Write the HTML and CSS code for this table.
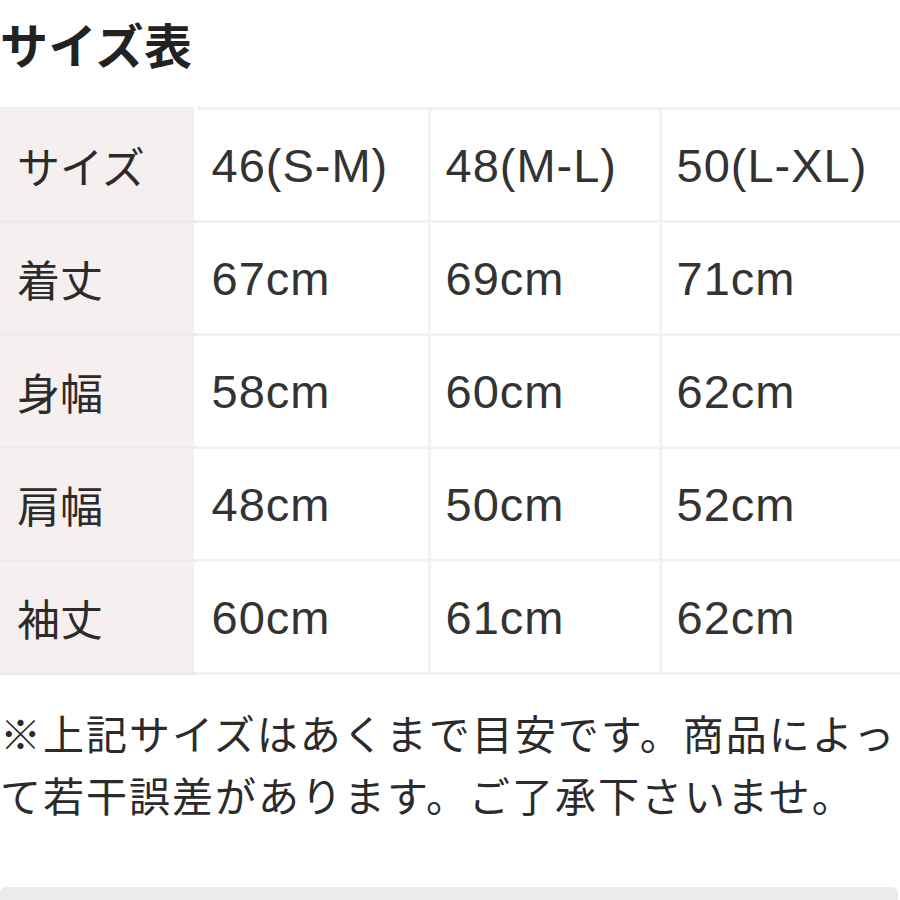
FILE: index.html
```html
<!DOCTYPE html>
<html lang="ja">
<head>
<meta charset="utf-8">
<link rel="stylesheet" href="styles.css">
</head>
<body>
<div class="page">
  <h2 class="title">サイズ表</h2>
  <table class="size-table">
    <colgroup>
      <col class="c1"><col class="c2"><col class="c3"><col class="c4">
    </colgroup>
    <tr><th>サイズ</th><td>46(S-M)</td><td>48(M-L)</td><td>50(L-XL)</td></tr>
    <tr><th>着丈</th><td>67cm</td><td>69cm</td><td>71cm</td></tr>
    <tr><th>身幅</th><td>58cm</td><td>60cm</td><td>62cm</td></tr>
    <tr><th>肩幅</th><td>48cm</td><td>50cm</td><td>52cm</td></tr>
    <tr><th>袖丈</th><td>60cm</td><td>61cm</td><td>62cm</td></tr>
  </table>
  <p class="note">※上記サイズはあくまで目安です。商品によっ<br>て若干誤差があります。ご了承下さいませ。</p>
  <div class="bottom-bar"></div>
</div>
</body>
</html>
```
FILE: styles.css
```css
html, body {
  margin: 0;
  padding: 0;
  background: #ffffff;
}
.page {
  width: 900px;
  height: 900px;
  overflow: hidden;
  font-family: "Liberation Sans", "Noto Sans CJK JP", sans-serif;
  color: #2b2b2b;
  display: flex;
  flex-direction: column;
}
.title {
  margin: 17px 0 0 0;
  font-family: "Noto Sans CJK JP", sans-serif;
  font-weight: 700;
  font-size: 48px;
  line-height: 52px;
  color: #222222;
  letter-spacing: 0.5px;
}
.size-table {
  margin-top: 38px;
  width: 900px;
  border-collapse: collapse;
  table-layout: fixed;
  border-top: 3px solid #f2f2f2;
}
.c1 { width: 195px; }
.c2 { width: 234px; }
.c3 { width: 231px; }
.c4 { width: 240px; }
.size-table th,
.size-table td {
  height: 113px;
  padding: 0 0 0 15px;
  text-align: left;
  vertical-align: middle;
  font-size: 47px;
  font-weight: 400;
  border-bottom: 3px solid #f2f2f2;
  box-sizing: border-box;
}
.size-table th {
  background: #f5efef;
  padding-left: 17px;
  font-family: "Noto Sans CJK JP", sans-serif;
  font-size: 43px;
  border-right: 3px solid #ffffff;
  border-bottom-color: #f0eaea;
}
.size-table td + td {
  border-left: 3px solid #f2f2f2;
}
.size-table td {
  letter-spacing: 1px;
  color: #333333;
}
.note {
  margin: 26px 0 0 0;
  font-family: "Noto Sans CJK JP", sans-serif;
  font-size: 41px;
  line-height: 62px;
  letter-spacing: 2px;
  white-space: nowrap;
  color: #2b2b2b;
}
.bottom-bar {
  margin-top: auto;
  height: 13px;
  background: #ebebeb;
  border-radius: 6px 6px 0 0;
  margin-right: 2px;
}
```
